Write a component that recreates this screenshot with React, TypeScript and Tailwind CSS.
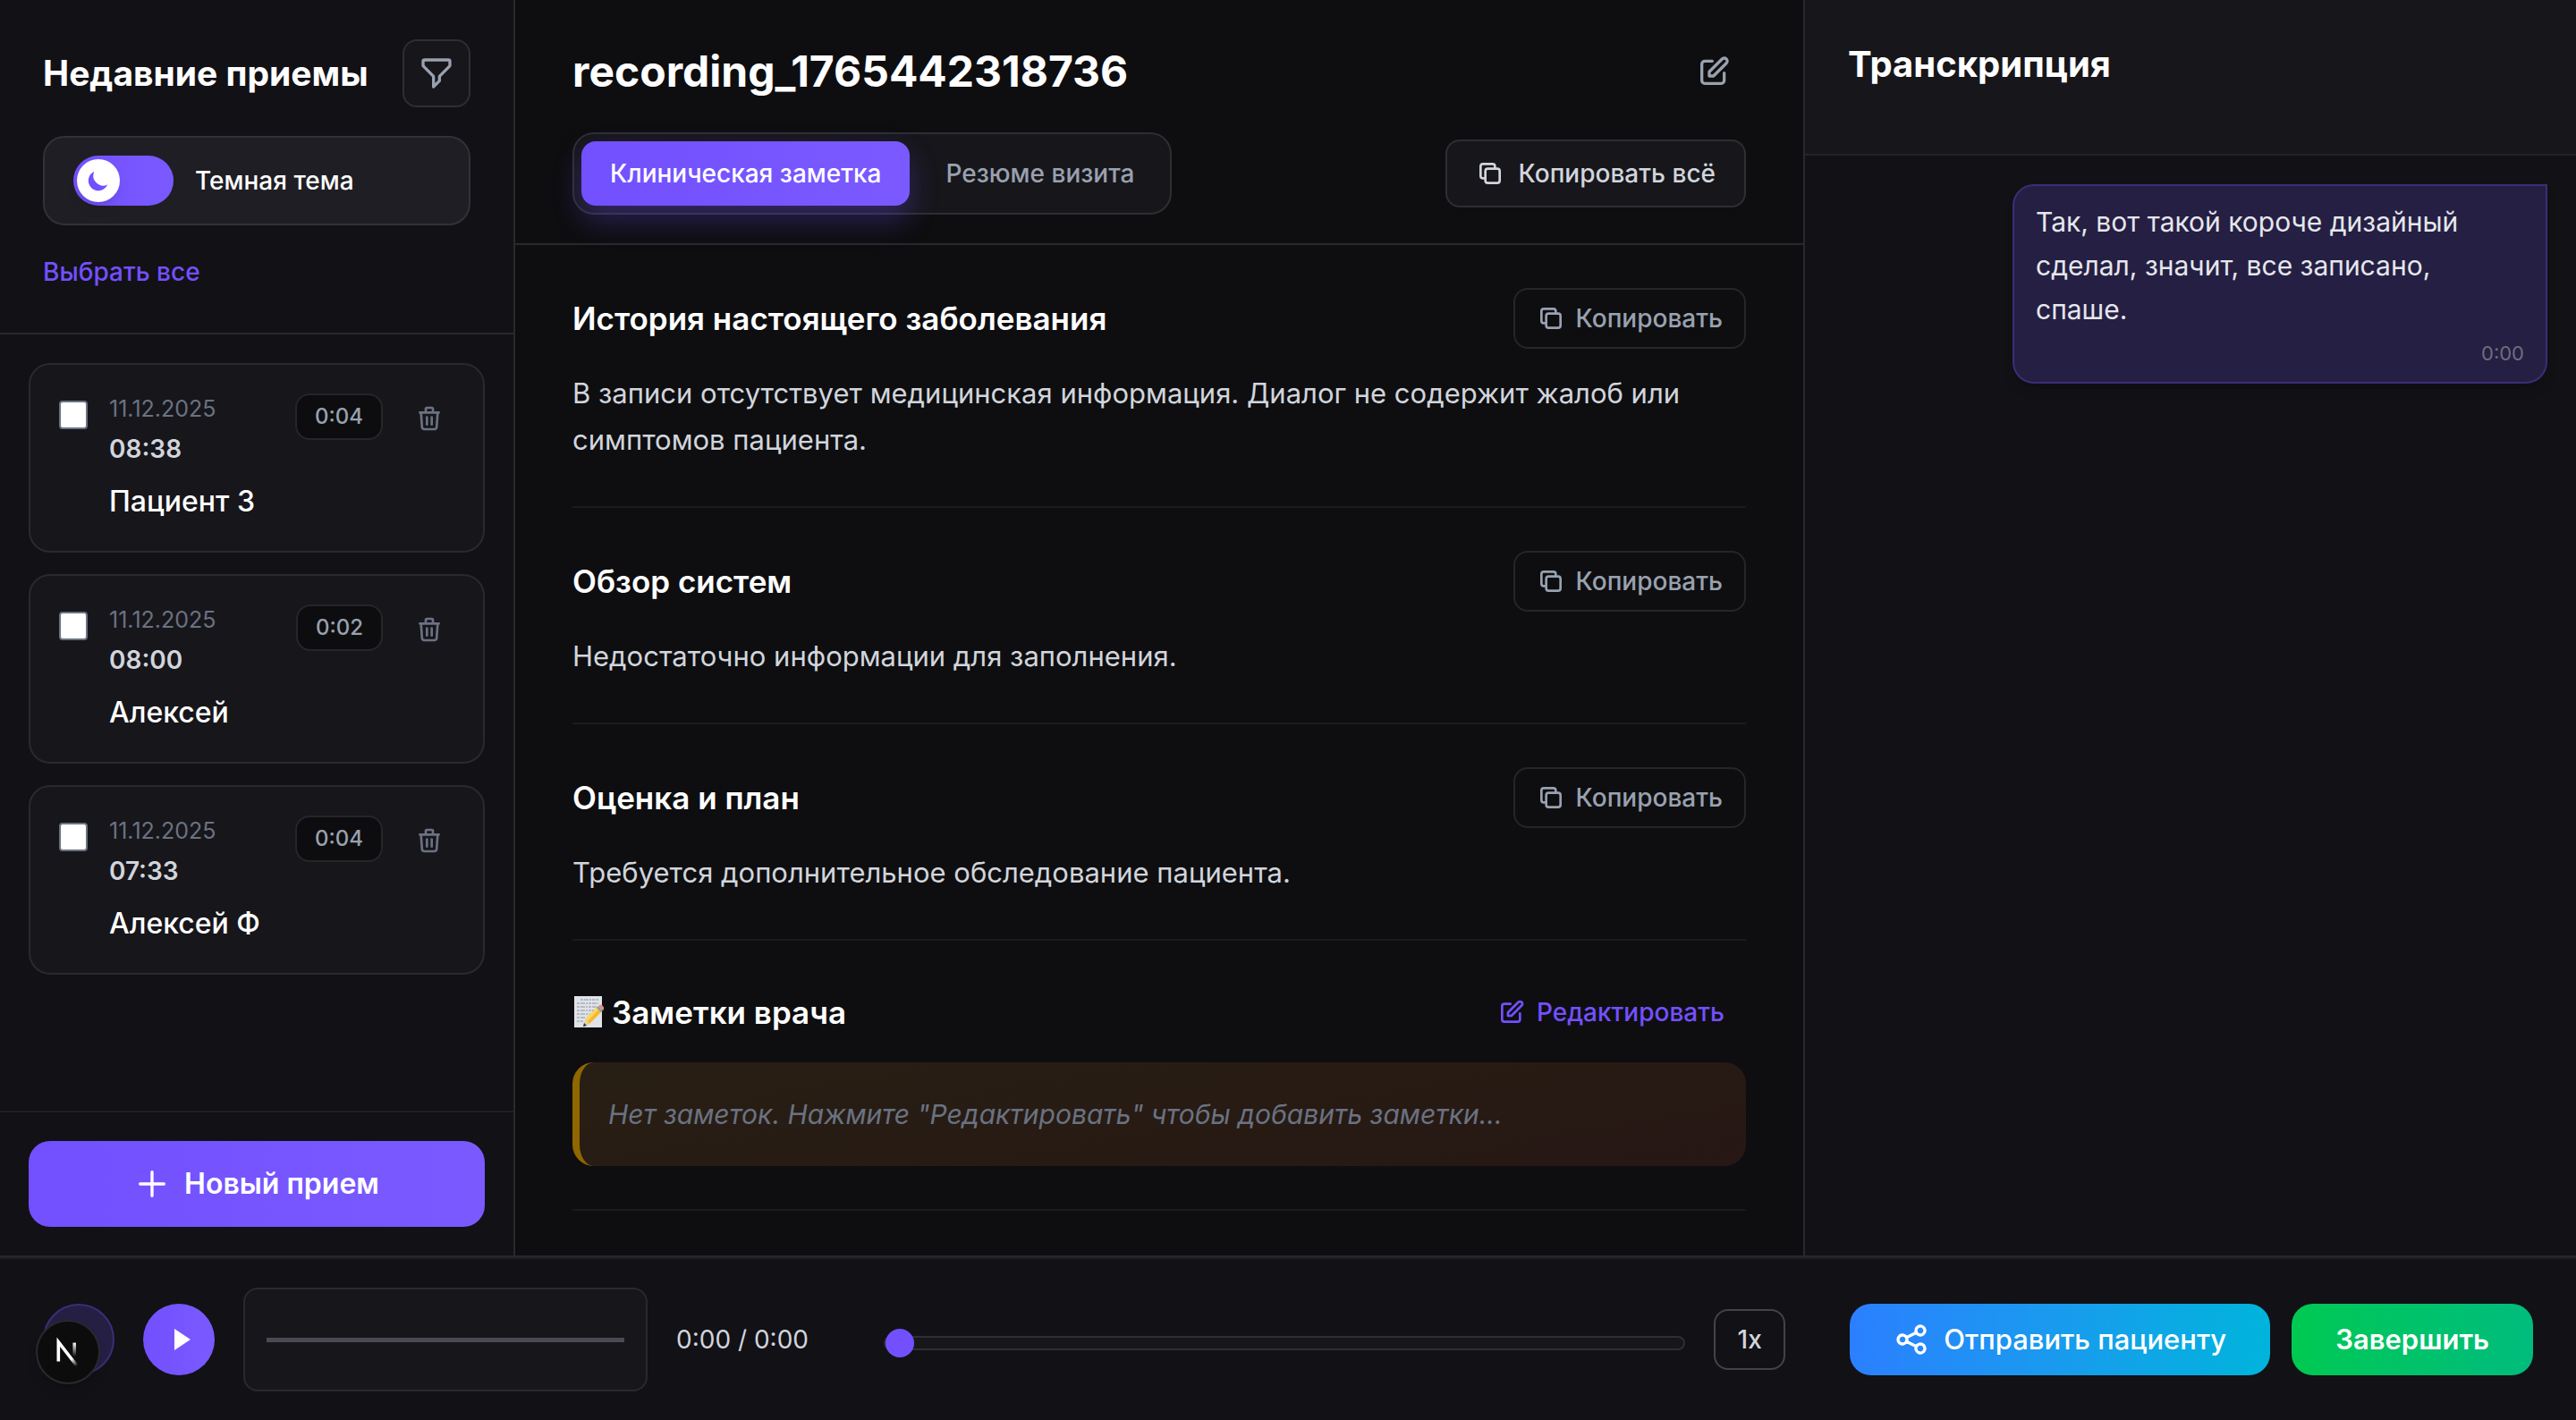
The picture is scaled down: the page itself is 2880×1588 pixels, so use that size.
import React from "react";

const ICONS = {
  filter:
    "M3 4a1 1 0 011-1h16a1 1 0 011 1v2.586a1 1 0 01-.293.707l-6.414 6.414a1 1 0 00-.293.707V17l-4 4v-6.586a1 1 0 00-.293-.707L3.293 7.293A1 1 0 013 6.586V4z",
  trash:
    "M19 7l-.867 12.142A2 2 0 0116.138 21H7.862a2 2 0 01-1.995-1.858L5 7m5 4v6m4-6v6m1-10V4a1 1 0 00-1-1h-4a1 1 0 00-1 1v3M4 7h16",
  edit: "M11 5H6a2 2 0 00-2 2v11a2 2 0 002 2h11a2 2 0 002-2v-5m-1.414-9.414a2 2 0 112.828 2.828L11.828 15H9v-2.828l8.586-8.586z",
  copy: "M8 16H6a2 2 0 01-2-2V6a2 2 0 012-2h8a2 2 0 012 2v2m-6 12h8a2 2 0 002-2v-8a2 2 0 00-2-2h-8a2 2 0 00-2 2v8a2 2 0 002 2z",
  plus: "M12 4v16m8-8H4",
  share:
    "M8.684 13.342C8.886 12.938 9 12.482 9 12c0-.482-.114-.938-.316-1.342m0 2.684a3 3 0 110-2.684m0 2.684l6.632 3.316m-6.632-6l6.632-3.316m0 0a3 3 0 105.367-2.684 3 3 0 00-5.367 2.684zm0 9.316a3 3 0 105.368 2.684 3 3 0 00-5.368-2.684z",
};

function Icon({ name, className = "size-8" }: { name: keyof typeof ICONS; className?: string }) {
  return (
    <svg
      viewBox="0 0 24 24"
      fill="none"
      stroke="currentColor"
      strokeWidth={2}
      strokeLinecap="round"
      strokeLinejoin="round"
      aria-hidden="true"
      className={`shrink-0 ${className}`}
    >
      <path d={ICONS[name]} />
    </svg>
  );
}

const visits = [
  { id: 1, date: "11.12.2025", time: "08:38", name: "Пациент 3", length: "0:04" },
  { id: 2, date: "11.12.2025", time: "08:00", name: "Алексей", length: "0:02" },
  { id: 3, date: "11.12.2025", time: "07:33", name: "Алексей Ф", length: "0:04" },
];

const sections = [
  {
    title: "История настоящего заболевания",
    text: "В записи отсутствует медицинская информация. Диалог не содержит жалоб или симптомов пациента.",
  },
  { title: "Обзор систем", text: "Недостаточно информации для заполнения." },
  { title: "Оценка и план", text: "Требуется дополнительное обследование пациента." },
];

function Sidebar() {
  return (
    <aside className="flex w-1/5 shrink-0 flex-col border-r-2 border-[#29292d] bg-[#121116]">
      <div className="border-b-2 border-[#29292d] px-12 pt-11 pb-12">
        <div className="flex items-center justify-between">
          <h2 className="text-[39px] leading-[48px] font-bold whitespace-nowrap text-white">Недавние приемы</h2>
          <button
            aria-label="Фильтр"
            className="rounded-2xl border-2 border-[#2e2e33] bg-[#17161b] p-4 text-gray-400"
          >
            <Icon name="filter" className="size-10" />
          </button>
        </div>
        <div className="mt-8 flex items-center gap-6 rounded-3xl border-2 border-[#313136] bg-[#1f1e24] px-8 py-5">
          <button
            id="theme"
            role="switch"
            aria-checked="true"
            className="flex h-14 w-28 items-center rounded-full bg-linear-to-r from-[#7250ff] to-[#7a5aff] p-1"
          >
            <span className="flex size-12 items-center justify-center rounded-full bg-white text-[#7250ff] shadow-lg">
              <svg viewBox="0 0 20 20" fill="currentColor" className="size-7" aria-hidden="true">
                <path d="M17.293 13.293A8 8 0 016.707 2.707a8.001 8.001 0 1010.586 10.586z" />
              </svg>
            </span>
          </button>
          <label htmlFor="theme" className="text-[28px] leading-10 font-medium text-white">
            Темная тема
          </label>
        </div>
        <button className="mt-8 block text-[28px] leading-10 font-medium text-[#7350ff]">Выбрать все</button>
      </div>

      <ul className="flex flex-1 flex-col gap-6 px-8 pt-8">
        {visits.map((v) => (
          <li
            key={v.id}
            className="flex items-start rounded-3xl border-2 border-[#2a2a2e] bg-[#17161b] p-8"
          >
            <input
              type="checkbox"
              id={`visit-${v.id}`}
              className="mt-2 size-8 shrink-0 appearance-none rounded-sm border-2 border-gray-500 bg-white"
            />
            <label htmlFor={`visit-${v.id}`} className="ml-6 flex-1">
              <span className="block text-[25px] leading-[34px] text-gray-500">{v.date}</span>
              <span className="mt-2 block text-[28px] leading-10 font-semibold text-gray-300">{v.time}</span>
              <span className="mt-4 block text-[32px] leading-[46px] font-medium text-white">{v.name}</span>
            </label>
            <span className="rounded-2xl border-2 border-[#26262a] bg-[#0d0d0f] px-5 py-2 text-[24px] leading-8 font-medium text-gray-400">
              {v.length}
            </span>
            <button aria-label="Удалить" className="ml-6 p-3 text-gray-500">
              <Icon name="trash" />
            </button>
          </li>
        ))}
      </ul>

      <div className="border-t-2 border-[#1f1f24] p-8">
        <button className="flex w-full items-center justify-center gap-4 rounded-3xl bg-linear-to-r from-[#7250ff] to-[#7a5aff] py-6 text-[32px] leading-[48px] font-semibold text-white">
          <Icon name="plus" className="size-10" />
          Новый прием
        </button>
      </div>
    </aside>
  );
}

function MemoIcon() {
  return (
    <svg viewBox="0 0 36 36" className="size-9 shrink-0" aria-hidden="true">
      <rect x="2" y="0" width="31" height="35" fill="#dfe3ea" />
      <g stroke="#8f929b" strokeWidth="1.2" strokeDasharray="3 1 5 1 2 1">
        <path d="M9 4h20M5 8h24M5 12h22M5 16h20M5 20h14M5 24h10M5 28h7" />
      </g>
      <path d="M12 34l3-9L28 12l5 5-14 14z" fill="#f5b92e" />
      <path d="M15 25L28 12l2 2-13 14z" fill="#ffd65c" />
      <path d="M27 13l2-2 5 5-2 2z" fill="#8b9bb0" />
      <path d="M29 11c2-2 4-1 5 0s2 3 0 5z" fill="#e0907f" />
      <path d="M12 34l3-9 4 6z" fill="#edcf9c" />
      <path d="M12 34l1-4 3 3z" fill="#333" />
    </svg>
  );
}

function Notes() {
  return (
    <main className="flex min-w-0 flex-1 flex-col bg-[#0e0e10]">
      <header className="border-b-2 border-[#29292d] px-16 pt-11 pb-8">
        <div className="flex items-center justify-between">
          <h1 className="text-[48px] leading-[64px] font-bold text-white">recording_1765442318736</h1>
          <button aria-label="Изменить название" className="p-4 text-gray-400">
            <Icon name="edit" className="size-10" />
          </button>
        </div>
        <div className="mt-8 flex items-center justify-between">
          <div
            role="tablist"
            className="flex gap-2 rounded-3xl border-2 border-[#2e2e33] bg-[#17161b] p-2 text-[28px] leading-10 font-medium"
          >
            <button
              role="tab"
              aria-selected="true"
              className="rounded-2xl bg-linear-to-r from-[#7250ff] to-[#7a5aff] px-8 py-4 text-white shadow-[0_16px_32px_rgba(114,80,255,0.3)]"
            >
              Клиническая заметка
            </button>
            <button role="tab" aria-selected="false" className="rounded-2xl px-8 py-4 text-gray-400">
              Резюме визита
            </button>
          </div>
          <button className="flex items-center gap-4 rounded-2xl border-2 border-[#2e2e33] bg-[#17161b] px-8 py-4 text-[28px] leading-10 font-medium text-gray-300">
            <Icon name="copy" />
            Копировать всё
          </button>
        </div>
      </header>

      <div className="flex flex-1 flex-col gap-12 px-16 pt-12">
        {sections.map((s) => (
          <section key={s.title} className="border-b-2 border-[#1b1b1f] pb-12">
            <div className="flex items-center justify-between">
              <h3 className="text-[35px] leading-[48px] font-semibold text-white">{s.title}</h3>
              <button className="flex items-center gap-3 rounded-2xl border-2 border-[#26262a] px-6 py-3 text-[28px] leading-10 font-medium text-gray-400">
                <Icon name="copy" />
                Копировать
              </button>
            </div>
            <p className="mt-6 text-[31px] leading-[52px] text-gray-300">{s.text}</p>
          </section>
        ))}
        <section className="border-b-2 border-[#1b1b1f] pb-12">
          <div className="flex items-center justify-between">
            <h3 className="flex items-center gap-2 text-[35px] leading-[48px] font-semibold text-white">
              <MemoIcon />
              Заметки врача
            </h3>
            <button className="flex items-center gap-3 px-6 py-3 text-[28px] leading-10 font-medium text-[#7350ff]">
              <Icon name="edit" />
              Редактировать
            </button>
          </div>
          <p className="mt-6 rounded-3xl border-l-8 border-[#8f6700] bg-linear-170 from-[#281f14] via-[#271b13] to-[#271715] p-8 text-[30px] leading-[52px] text-gray-500 italic">
            Нет заметок. Нажмите "Редактировать" чтобы добавить заметки...
          </p>
        </section>
      </div>
    </main>
  );
}

function Transcript() {
  return (
    <aside className="w-[30%] shrink-0 border-l-2 border-[#29292d] bg-[#121116]">
      <header className="border-b-2 border-[#232328] bg-[#17161b] px-12 pt-12 pb-[76px]">
        <h2 className="text-[40px] leading-[48px] font-bold text-white">Транскрипция</h2>
      </header>
      <div className="flex justify-end p-8">
        <div className="w-[598px] rounded-3xl rounded-tr-none border-2 border-[#3e2c78] bg-[#251f44] px-6 py-4 shadow-lg">
          <p className="text-[30px] leading-[49px] text-gray-200">
            Так, вот такой короче дизайный сделал, значит, все записано, спаше.
          </p>
          <p className="mt-2 text-right text-[22px] leading-8 text-[#6f6e78]">0:00</p>
        </div>
      </div>
    </aside>
  );
}

function NextBadge() {
  return (
    <button
      aria-label="Next.js"
      className="absolute top-4 -left-2.5 size-[72px] rounded-full border-2 border-[#29292d] bg-[#0c0c0d] shadow-lg"
    >
      <svg viewBox="0 0 36 36" fill="none" className="size-full" aria-hidden="true">
        <defs>
          <linearGradient id="n-diagonal" x1="9.95" y1="11.12" x2="15.48" y2="17.97" gradientUnits="userSpaceOnUse">
            <stop stopColor="white" />
            <stop offset="0.6" stopColor="white" stopOpacity="0" />
            <stop offset="1" stopColor="white" stopOpacity="0" />
          </linearGradient>
          <linearGradient id="n-stem" x1="11.82" y1="1.4" x2="11.79" y2="9.63" gradientUnits="userSpaceOnUse">
            <stop stopColor="white" />
            <stop offset="1" stopColor="white" stopOpacity="0" />
          </linearGradient>
        </defs>
        <g transform="translate(10 11)" strokeWidth="1.9">
          <path d="M13.3 15.2L2.34 1V12.6" stroke="url(#n-diagonal)" />
          <path d="M11.825 1.5V13.1" stroke="url(#n-stem)" />
        </g>
      </svg>
    </button>
  );
}

function Player() {
  return (
    <footer className="border-t-2 border-[#29292d] bg-[#121116]">
      <div className="flex items-center border-t-2 border-[#1d1d22] px-12 py-8">
        <div className="flex flex-1 items-center gap-8">
          <div className="relative size-20 shrink-0 rounded-full border-2 border-[#3e2c78] bg-[#251f44]">
            <NextBadge />
          </div>
          <button
            aria-label="Воспроизвести"
            className="flex size-20 shrink-0 items-center justify-center rounded-full bg-linear-to-r from-[#7250ff] to-[#7a5aff] pl-2 text-white"
          >
            <svg viewBox="0 0 20 24" fill="currentColor" className="h-6 w-5" aria-hidden="true">
              <path d="M1 0l18 12L1 24z" />
            </svg>
          </button>
          <div className="flex h-[116px] w-[452px] shrink-0 items-center rounded-2xl border-2 border-[#2a2a2e] bg-[#17161b] px-6">
            <div className="h-[5px] w-full bg-[#4b4a52]" />
          </div>
          <span className="w-[200px] shrink-0 text-[28px] leading-10 text-gray-300">0:00 / 0:00</span>
          <input
            type="range"
            aria-label="Позиция"
            defaultValue={0}
            className="mt-2 h-4 min-w-0 flex-1 appearance-none rounded-lg border-2 border-[#2e2e33] bg-[#17161b] [&::-webkit-slider-thumb]:size-8 [&::-webkit-slider-thumb]:appearance-none [&::-webkit-slider-thumb]:rounded-full [&::-webkit-slider-thumb]:bg-[#7350ff]"
          />
          <button className="h-[68px] w-20 shrink-0 rounded-2xl border-2 border-[#434349] text-[28px] leading-10 font-medium text-gray-300">
            1x
          </button>
        </div>
        <div className="ml-[72px] flex shrink-0 gap-6 text-[31px] leading-[48px] text-white">
          <button className="flex items-center gap-4 rounded-3xl bg-linear-to-r from-[#2b7fff] to-[#00b4db] px-[49px] py-4 font-medium">
            <Icon name="share" className="size-10" />
            Отправить пациенту
          </button>
          <button className="rounded-3xl bg-linear-to-r from-[#00c951] to-[#00bc7d] px-[49px] py-4 font-semibold">
            Завершить
          </button>
        </div>
      </div>
    </footer>
  );
}

export default function App() {
  return (
    <div className="flex min-h-screen flex-col bg-[#0e0e10] font-['Inter','Noto_Sans',sans-serif]">
      <div className="flex flex-1">
        <Sidebar />
        <Notes />
        <Transcript />
      </div>
      <Player />
    </div>
  );
}
